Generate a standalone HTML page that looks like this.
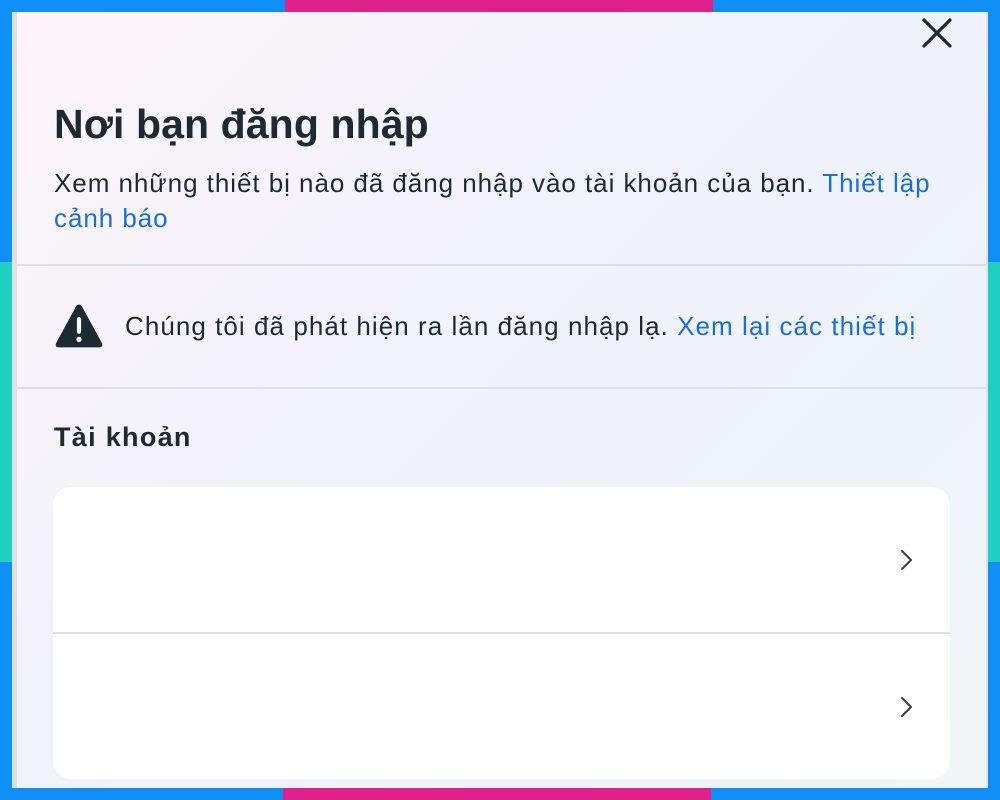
<!DOCTYPE html>
<html><head><meta charset="utf-8"><style>
*{margin:0;padding:0;box-sizing:border-box}
body{width:1000px;height:800px;background:#0f8ff5;position:relative;overflow:hidden;font-family:"Liberation Sans",sans-serif;color:#1c2b33}
.bar{position:absolute}
.panel{position:absolute;left:12px;top:12px;width:976px;height:776px;background:linear-gradient(135deg,#fcf4f8 0%,#f1f2fb 45%,#eef3fa 75%,#eef6f6 100%);border-left:5px solid #dde0e6;border-right:2px solid #dfe3ea;overflow:hidden}
h1{position:absolute;left:37px;top:89px;font-size:41px;font-weight:bold;letter-spacing:0.1px;white-space:nowrap}
.sub{position:absolute;left:37px;top:154px;font-size:26px;letter-spacing:0.95px;line-height:35px;width:900px}
a{color:#1a6ed8;text-decoration:none}
.hr{position:absolute;left:0;right:0;height:2px;background:#dcdfe4}
.warn{position:absolute;left:108px;top:299px;font-size:26px;letter-spacing:1.05px;white-space:nowrap}
.acct{position:absolute;left:37px;top:410px;font-size:27px;font-weight:bold;letter-spacing:1.3px}
.card{position:absolute;left:36px;top:475px;width:897px;height:292px;background:#fff;border-radius:18px;overflow:hidden}
.sep{position:absolute;left:0;right:0;top:145px;height:2px;background:#dedfe2}
</style></head><body>
<div class="bar" style="left:285px;top:0;width:428px;height:12px;background:#e0218a"></div>
<div class="bar" style="left:283px;top:788px;width:428px;height:12px;background:#e0218a"></div>
<div class="bar" style="left:0;top:262px;width:12px;height:300px;background:#1fcfc1"></div>
<div class="bar" style="left:988px;top:262px;width:12px;height:300px;background:#1fcfc1"></div>
<div class="panel">
<svg style="position:absolute;left:904px;top:5px" width="32" height="32" viewBox="0 0 32 32"><path d="M3 3L29 29M29 3L3 29" stroke="#1c2b33" stroke-width="3.2" stroke-linecap="round"/></svg>
<h1>Nơi bạn đăng nhập</h1>
<div class="sub">Xem những thiết bị nào đã đăng nhập vào tài khoản của bạn. <a>Thiết lập cảnh báo</a></div>
<div class="hr" style="top:252px"></div>
<svg style="position:absolute;left:37px;top:290px" width="50" height="49" viewBox="0 0 48 46"><path d="M24 2Q26 2 27 4L46 39Q47.5 43 43 43H5Q0.5 43 2 39L21 4Q22 2 24 2Z" fill="#1c2b33"/><rect x="22" y="14" width="4" height="16" rx="2" fill="#fff"/><circle cx="24" cy="35.5" r="2.5" fill="#fff"/></svg>
<div class="warn">Chúng tôi đã phát hiện ra lần đăng nhập lạ. <a>Xem lại các thiết bị</a></div>
<div class="hr" style="top:375px"></div>
<div class="acct">Tài khoản</div>
<div class="card">
<svg style="position:absolute;left:846px;top:61px" width="16" height="24" viewBox="0 0 16 24"><path d="M3 3L12 12L3 21" stroke="#3b4650" stroke-width="2.2" fill="none" stroke-linecap="round" stroke-linejoin="round"/></svg>
<div class="sep"></div>
<svg style="position:absolute;left:846px;top:208px" width="16" height="24" viewBox="0 0 16 24"><path d="M3 3L12 12L3 21" stroke="#3b4650" stroke-width="2.2" fill="none" stroke-linecap="round" stroke-linejoin="round"/></svg>
</div>
</div>
</body></html>
